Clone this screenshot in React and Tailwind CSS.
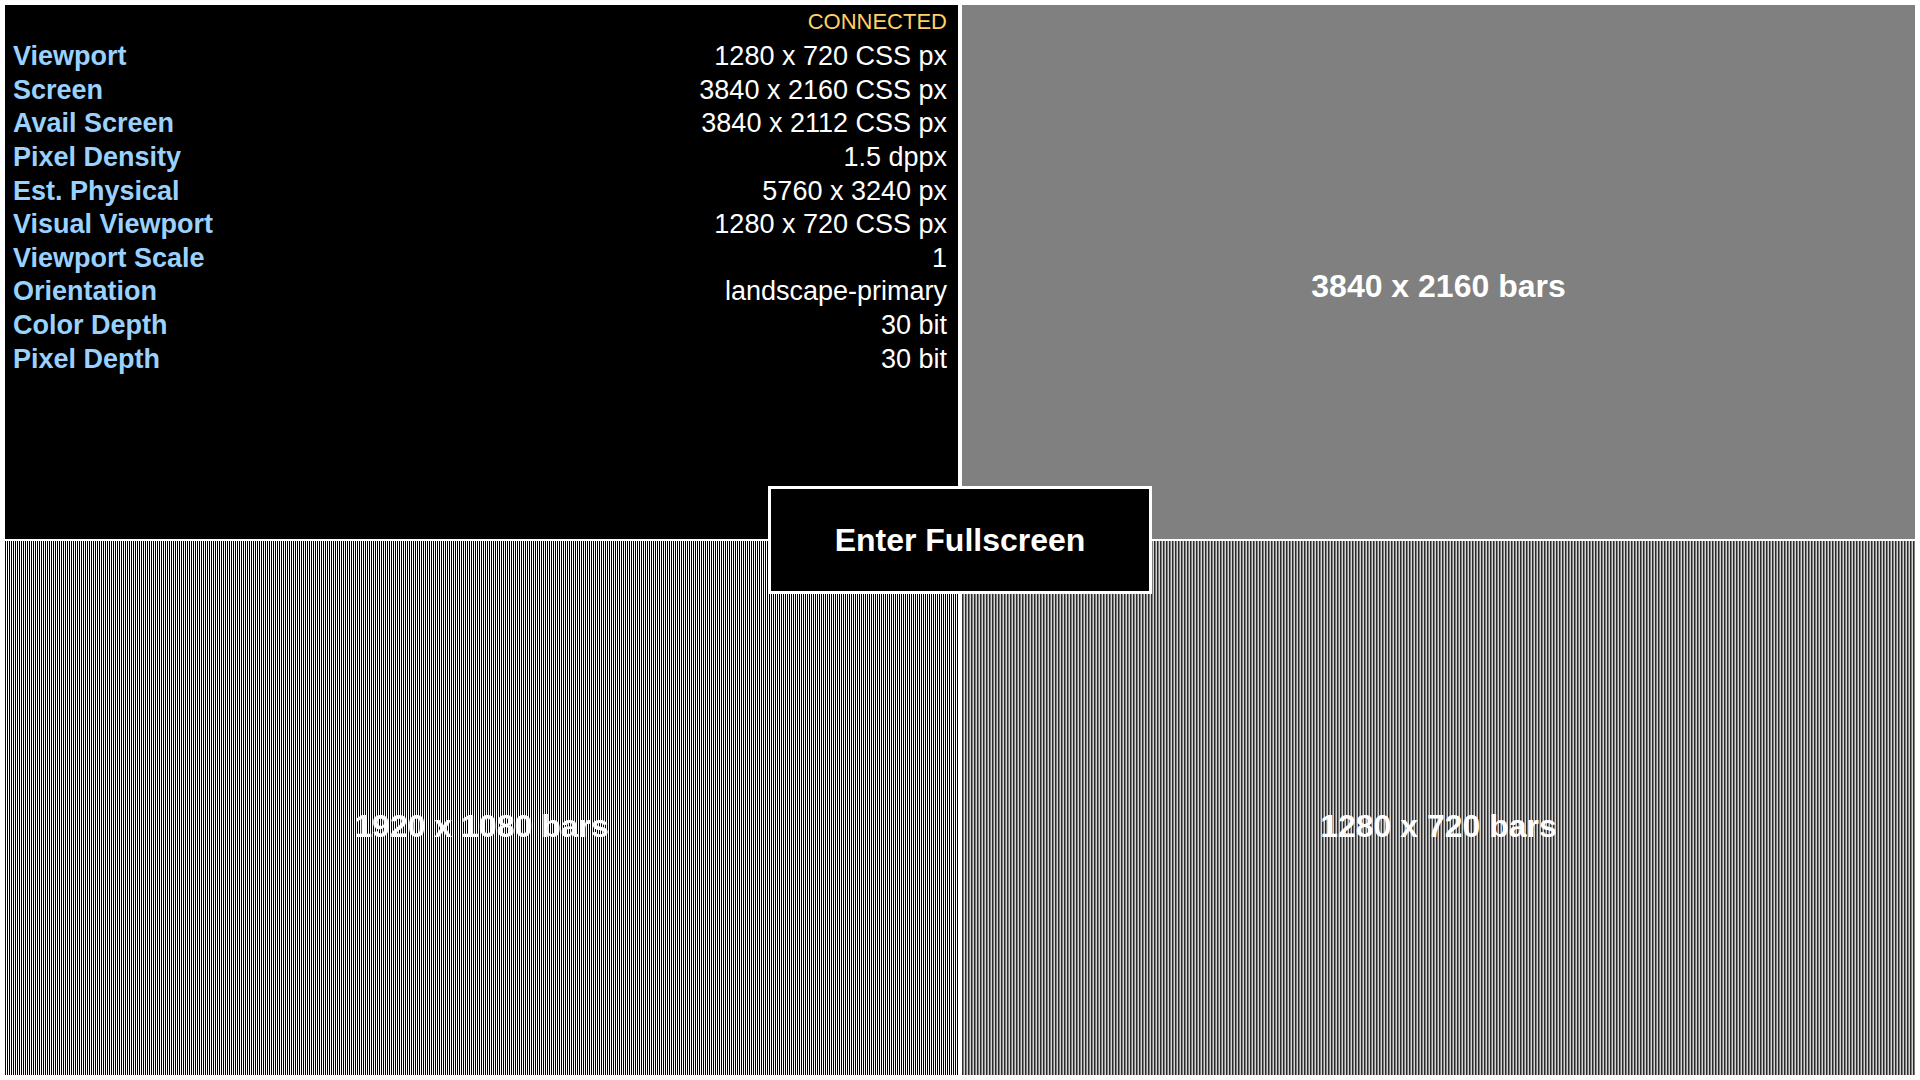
const rows = [
  ['Viewport', '1280 x 720 CSS px'],
  ['Screen', '3840 x 2160 CSS px'],
  ['Avail Screen', '3840 x 2112 CSS px'],
  ['Pixel Density', '1.5 dppx'],
  ['Est. Physical', '5760 x 3240 px'],
  ['Visual Viewport', '1280 x 720 CSS px'],
  ['Viewport Scale', '1'],
  ['Orientation', 'landscape-primary'],
  ['Color Depth', '30 bit'],
  ['Pixel Depth', '30 bit'],
];

function Bars({ label, className }) {
  return (
    <section className={`flex items-center justify-center ${className}`}>
      <h2 className="text-[32px] leading-[38px] font-bold text-white">{label}</h2>
    </section>
  );
}

function Info() {
  return (
    <section className="bg-black pt-1 pr-[11px] pl-2 text-white">
      <p className="text-right text-[22px] leading-[26px] text-[#ffd166]">CONNECTED</p>
      <table className="mt-[5px] h-[336px] w-full text-[27px] leading-[33px]">
        <tbody>
          {rows.map(([name, value]) => (
            <tr key={name}>
              <th scope="row" className="p-0 text-left font-bold text-[#9ad1ff]">{name}</th>
              <td className="p-0 text-right">{value}</td>
            </tr>
          ))}
        </tbody>
      </table>
    </section>
  );
}

export default function App() {
  return (
    <main className="relative grid h-screen grid-cols-2 grid-rows-2 gap-x-1 gap-y-0.5 bg-white p-[5px] font-['Liberation_Sans',Arial,sans-serif]">
      <Info />
      <Bars label="3840 x 2160 bars" className="bg-[#808080] pt-7" />
      <Bars
        label="1920 x 1080 bars"
        className="bg-[repeating-linear-gradient(90deg,#000_0px,#000_1px,#fff_1px,#fff_2px)] pt-9"
      />
      <Bars
        label="1280 x 720 bars"
        className="bg-[repeating-linear-gradient(90deg,#2b2b2b_0px,#2b2b2b_1px,#808080_1px,#808080_2px,#d4d4d4_2px,#d4d4d4_3px)] pt-9"
      />
      <button
        type="button"
        className="absolute top-1/2 left-1/2 h-27 w-96 -translate-x-1/2 -translate-y-1/2 border-3 border-white bg-black text-[32px] leading-[38px] font-bold text-white"
      >
        Enter Fullscreen
      </button>
    </main>
  );
}
